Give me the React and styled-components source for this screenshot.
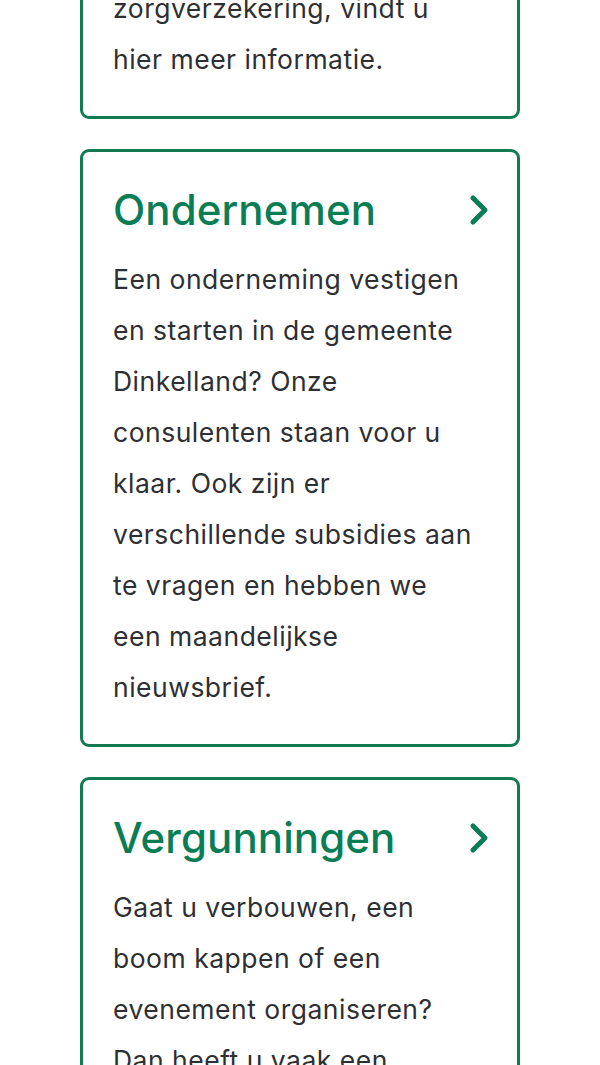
import React from 'react';
import styled, {createGlobalStyle} from 'styled-components';

const GlobalStyle = createGlobalStyle`
    html, body {
        margin: 0;
        padding: 0;
        background: #ffffff;
    }
    body {
        font-family: Inter, "Noto Sans", sans-serif;
        overflow: hidden;
    }
`;

const PageStyle = styled.div`
    display: flex;
    flex-direction: column;
    gap: 30px;
    padding: 0 80px;
    margin-top: -173px;
`;

const CardStyle = styled.a`
    display: block;
    border: 3px solid #137a52;
    border-radius: 9px;
    padding: 32px 27px 31px 30px;
    text-decoration: none;
    background: #fff;
`;

const CardHeaderStyle = styled.div`
    display: flex;
    align-items: center;
    justify-content: space-between;
    margin-bottom: 18px;
`;

const CardTitleStyle = styled.h2`
    margin: 0;
    font-size: 42px;
    line-height: 52px;
    font-weight: 500;
    color: #0b7d55;
    letter-spacing: 0.1px;
`;

const CardTextStyle = styled.p`
    margin: 0;
    padding-right: 14px;
    font-size: 26.5px;
    line-height: 51px;
    letter-spacing: 0.5px;
    color: #2e2f33;
`;

const Chevron = () => (
    <svg width="22" height="34" viewBox="0 0 22 34">
        <polyline points="5,5 17,17 5,29" fill="none" stroke="#0b7d55"
                  strokeWidth="5" strokeLinecap="round" strokeLinejoin="round"/>
    </svg>
);

const cards = [
    {
        title: 'Zorg',
        text: 'Heeft u vragen over uw zorgverzekering, vindt u hier meer informatie.'
    },
    {
        title: 'Ondernemen',
        text: 'Een onderneming vestigen en starten in de gemeente Dinkelland? Onze consulenten staan voor u klaar. Ook zijn er verschillende subsidies aan te vragen en hebben we een maandelijkse nieuwsbrief.'
    },
    {
        title: 'Vergunningen',
        text: 'Gaat u verbouwen, een boom kappen of een evenement organiseren? Dan heeft u vaak een vergunning nodig. Hier leest u welke vergunning u nodig heeft.'
    }
];

const App = () => (
    <>
        <GlobalStyle/>
        <PageStyle>
            {cards.map(card => (
                <CardStyle key={card.title} href="#">
                    <CardHeaderStyle>
                        <CardTitleStyle>{card.title}</CardTitleStyle>
                        <Chevron/>
                    </CardHeaderStyle>
                    <CardTextStyle>{card.text}</CardTextStyle>
                </CardStyle>
            ))}
        </PageStyle>
    </>
);

export default App;
